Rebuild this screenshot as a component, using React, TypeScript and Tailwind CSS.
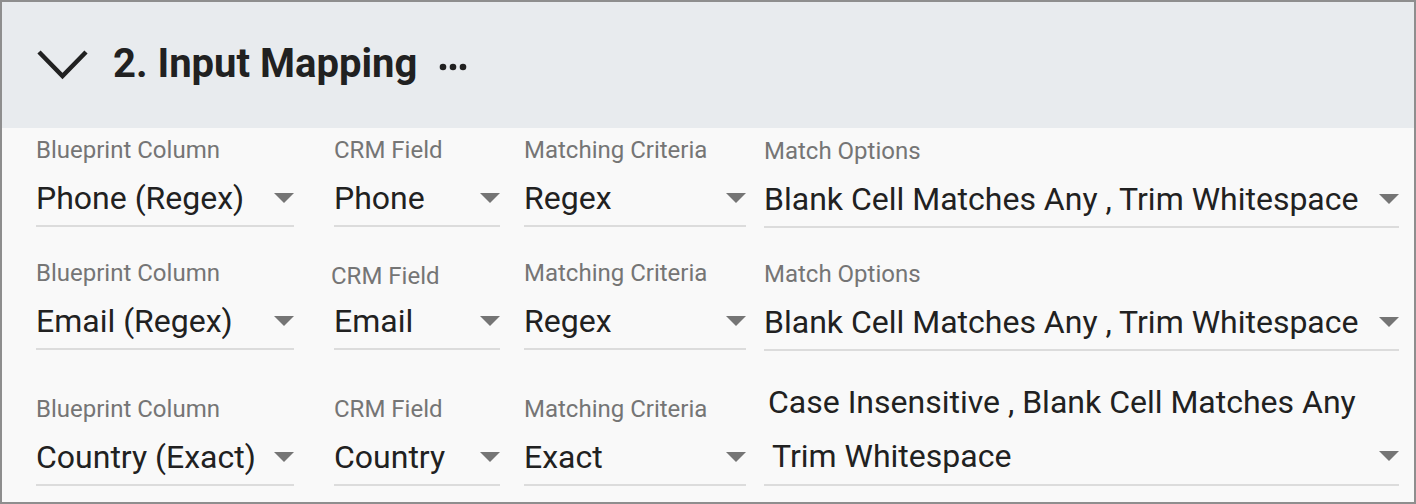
type FieldProps = {
  label?: string;
  value: string;
  width: string;
  className?: string;
  labelClass?: string;
};

function Caret() {
  return (
    <svg width="20" height="10" viewBox="0 0 20 10" className="shrink-0">
      <polygon points="0,0 20,0 10,10" fill="#757575" />
    </svg>
  );
}

function Field({ label, value, width, className = "", labelClass = "" }: FieldProps) {
  return (
    <div className={`flex flex-col ${width} ${className}`}>
      {label && (
        <div className={`text-[24px] leading-[28px] text-[#757575] whitespace-nowrap ${labelClass}`}>
          {label}
        </div>
      )}
      <div className="mt-[14px] flex h-[49px] items-start border-b-2 border-[#dcdcdc]">
        <div className="flex h-[40px] w-full items-center">
          <span className="flex-1 whitespace-nowrap text-[32px] leading-[40px] text-[#212121]">
            {value}
          </span>
          <Caret />
        </div>
      </div>
    </div>
  );
}

const rows = [
  { blueprint: "Phone (Regex)", crm: "Phone", criteria: "Regex" },
  { blueprint: "Email (Regex)", crm: "Email", criteria: "Regex" },
];

export default function App() {
  return (
    <div
      className="h-[504px] w-[1416px] overflow-hidden border-2 border-[#8e8e8e] bg-[#f9f9f9]"
      style={{ fontFamily: "Roboto, 'Noto Sans', sans-serif" }}
    >
      {/* section header */}
      <div className="flex h-[126px] items-center bg-[#e8ebee] pb-[3px] pl-[33px]">
        <svg width="56" height="36" viewBox="0 0 56 36" className="mt-[3px]">
          <polyline
            points="4,5 27.5,29 51,5"
            fill="none"
            stroke="#212121"
            strokeWidth="4.5"
          />
        </svg>
        <h2 className="ml-[22px] text-[40px] leading-[48px] font-bold text-[#212121]">
          2. Input Mapping
        </h2>
        <svg width="28" height="8" viewBox="0 0 28 8" className="ml-[22px] mt-[6px]">
          <circle cx="4" cy="4" r="3.3" fill="#212121" />
          <circle cx="14" cy="4" r="3.3" fill="#212121" />
          <circle cx="24" cy="4" r="3.3" fill="#212121" />
        </svg>
      </div>

      {/* mapping rows */}
      <div className="flex flex-col gap-[32px] pl-[34px] pt-[8px]">
        {rows.map((r, i) => (
          <div key={i} className="flex items-end">
            <Field label="Blueprint Column" value={r.blueprint} width="w-[258px]" />
            <Field
              label="CRM Field"
              value={r.crm}
              width="w-[166px]"
              className="ml-[40px]"
              labelClass={i === 1 ? "-ml-[3px] translate-y-[3px]" : ""}
            />
            <Field label="Matching Criteria" value={r.criteria} width="w-[222px]" className="ml-[24px]" />
            <Field
              label="Match Options"
              value="Blank Cell Matches Any , Trim Whitespace"
              width="w-[635px]"
              className="ml-[18px] translate-y-[1px]"
            />
          </div>
        ))}

        <div className="flex items-end">
          <Field label="Blueprint Column" value="Country (Exact)" width="w-[258px]" />
          <Field label="CRM Field" value="Country" width="w-[166px]" className="ml-[40px]" />
          <Field label="Matching Criteria" value="Exact" width="w-[222px]" className="ml-[24px]" />
          {/* multi-select with wrapped options */}
          <div className="ml-[18px] flex w-[635px] flex-col border-b-2 border-[#dcdcdc] pb-[8px]">
            <div className="pl-[4px] text-[32px] leading-[40px] whitespace-nowrap text-[#212121]">
              Case Insensitive , Blank Cell Matches Any
            </div>
            <div className="mt-[14px] flex h-[40px] items-center">
              <span className="flex-1 pl-[8px] text-[32px] leading-[40px] whitespace-nowrap text-[#212121]">
                Trim Whitespace
              </span>
              <Caret />
            </div>
          </div>
        </div>
      </div>
    </div>
  );
}
